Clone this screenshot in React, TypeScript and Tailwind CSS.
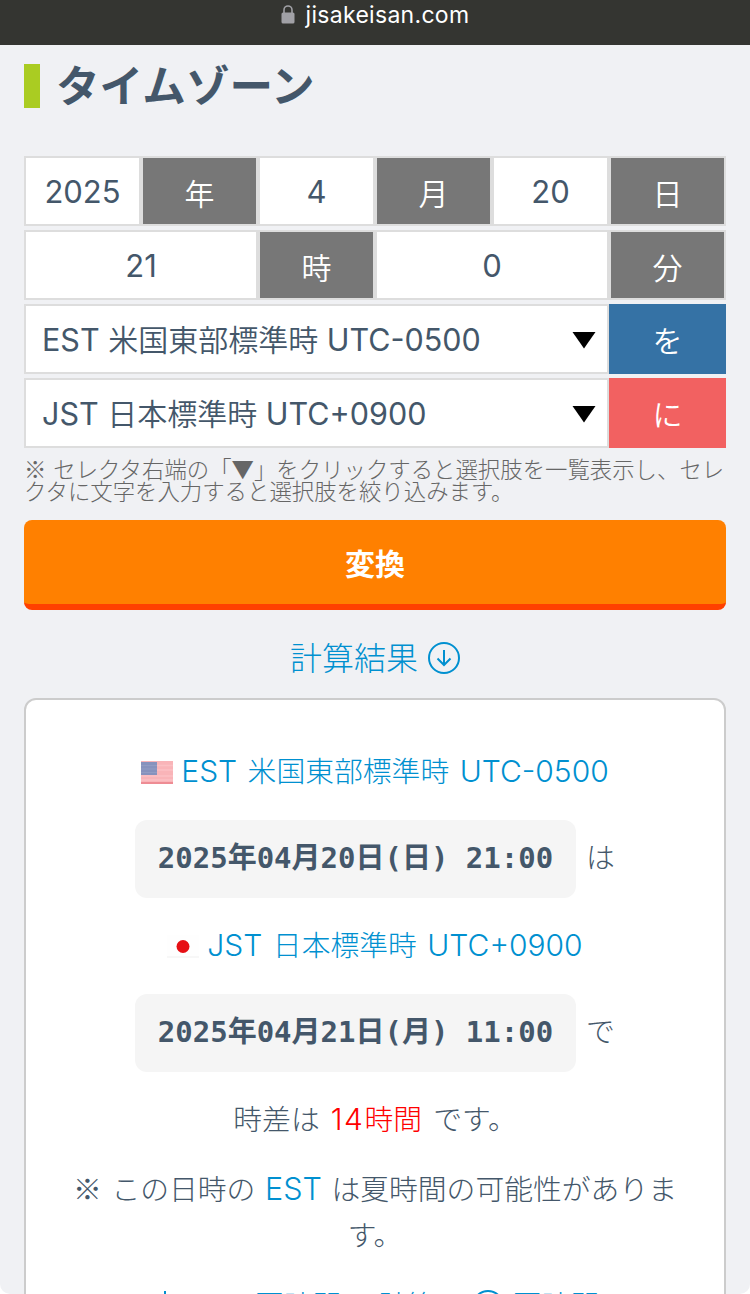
import React from "react";

type CELL_PROPS = {
  text: string;
  wide?: boolean;
};

function ValueCell(props: CELL_PROPS) {
  const { text, wide } = props;
  return (
    <div
      className={`${
        wide ? "col-span-2" : "col-span-1"
      } flex h-[70px] items-center justify-center border-2 border-[#ddd] bg-white pt-[3px] text-[31px]`}
    >
      {text}
    </div>
  );
}

function UnitCell(props: CELL_PROPS) {
  return (
    <div className="flex h-[70px] items-center justify-center border-2 border-[#ddd] bg-[#777] pt-[6px] text-[30px] font-[350] text-white">
      {props.text}
    </div>
  );
}

type ZONE_ROW_PROPS = {
  code: string;
  name: string;
  offset: string;
  particle: string;
  color: string;
};

function ZoneRow(props: ZONE_ROW_PROPS) {
  const { code, name, offset, particle, color } = props;
  return (
    <div className="flex h-[70px]">
      <div className="flex w-[585px] items-center justify-between border-2 border-[#ddd] bg-white pr-[11px] pl-4">
        <span className="pt-px text-[30.500px] leading-[60px] whitespace-nowrap">
          {code} <span className="text-[30px] font-[350]">{name}</span> {offset}
        </span>
        <svg className="mt-px" width="24" height="18" viewBox="0 0 24 18">
          <path d="M0.5 1h23L12 17.5z" fill="#000" />
        </svg>
      </div>
      <div
        className={`${color} flex w-[117px] items-center justify-center pt-[5px] text-[30px] font-[350] text-white`}
      >
        {particle}
      </div>
    </div>
  );
}

function UsFlag() {
  return (
    <svg className="mt-0.5" width="32" height="23" viewBox="0 0 32 23">
      <rect width="32" height="23" fill="#f9b4b8" />
      <path d="M16 4.5h16M16 9h16M0 15h32M0 19h32" stroke="#fbc0c3" strokeWidth="1.4" />
      <path d="M0 22h32" stroke="#ee8c94" strokeWidth="2" />
      <rect y="1" width="16" height="13" fill="#8792bd" />
      <path d="M0 4.5h16M0 8h16M0 11.5h16" stroke="#929cc3" strokeWidth="1" />
    </svg>
  );
}

function JpFlag() {
  return (
    <svg className="mt-0.5" width="32" height="23" viewBox="0 0 32 23">
      <rect width="32" height="23" fill="#fefefe" />
      <path d="M0 22h32" stroke="#f7f7f7" strokeWidth="2" />
      <circle cx="16" cy="11.5" r="6.5" fill="#e60f14" />
    </svg>
  );
}

type ZONE_LINK_PROPS = {
  flag: React.ReactNode;
  code: string;
  name: string;
  offset: string;
};

function ZoneLink(props: ZONE_LINK_PROPS) {
  const { flag, code, name, offset } = props;
  return (
    <a className="flex h-12 items-center justify-center gap-[8px] text-[#0090d0]">
      {flag}
      <span className="pb-px text-[30px] leading-[48px] whitespace-nowrap [word-spacing:2px]">
        {code} <span className="text-[28.800px]">{name}</span> {offset}
      </span>
    </a>
  );
}

type RESULT_PROPS = {
  date: string;
  particle: string;
};

function ResultDate(props: RESULT_PROPS) {
  return (
    <div className="flex h-[78px] pl-[109px]">
      <code className="flex w-[441px] items-center justify-center rounded-xl bg-[#f5f5f5] font-['DejaVu_Sans_Mono','Noto_Sans_CJK_JP',monospace] text-[29px] font-bold whitespace-pre">
        {props.date}
      </code>
      <span className="ml-[10px] self-center pb-0.5">{props.particle}</span>
    </div>
  );
}

function App() {
  return (
    <div className="h-[1294px] w-[750px] overflow-hidden rounded-b-[10px] bg-[#f0f1f4] font-['Inter','Noto_Sans_CJK_JP',sans-serif] text-[#44576a]">
      <header className="flex h-[45px] items-start justify-center bg-[#343531] text-white">
        <svg className="mt-[5px] mr-[11px]" width="14" height="19" viewBox="0 0 14 19">
          <path d="M3 9V5a4 4 0 0 1 8 0v4" fill="none" stroke="#a1a1a6" strokeWidth="1.6" />
          <rect x="0.5" y="7.5" width="13" height="11" rx="1.6" fill="#a1a1a6" />
        </svg>
        <span className="text-[23px] leading-[30px] tracking-[0.3px]">jisakeisan.com</span>
      </header>

      <main className="px-6">
        <h1 className="mt-[19px] flex h-11 items-center border-l-16 border-[#aacc22] pt-0.5 pl-4 text-[43.600px] font-bold whitespace-nowrap">
          タイムゾーン
        </h1>

        <div className="mt-12 flex flex-col gap-1">
          <div className="grid grid-cols-6">
            <ValueCell text="2025" />
            <UnitCell text="年" />
            <ValueCell text="4" />
            <UnitCell text="月" />
            <ValueCell text="20" />
            <UnitCell text="日" />
          </div>
          <div className="grid grid-cols-6">
            <ValueCell text="21" wide />
            <UnitCell text="時" />
            <ValueCell text="0" wide />
            <UnitCell text="分" />
          </div>
          <ZoneRow
            code="EST"
            name="米国東部標準時"
            offset="UTC-0500"
            particle="を"
            color="bg-[#3572a5]"
          />
          <ZoneRow
            code="JST"
            name="日本標準時"
            offset="UTC+0900"
            particle="に"
            color="bg-[#f26161]"
          />
        </div>

        <p className="mt-[9px] font-['Noto_Sans_CJK_JP',sans-serif] text-[22.400px] leading-[22.400px] font-light whitespace-nowrap text-[#666]">
          <span className="[word-spacing:2px]">※ セレクタ右端の「▼」をクリックすると選択肢を一覧表示し、セレ</span>
          <br />
          クタに文字を入力すると選択肢を絞り込みます。
        </p>

        <button className="mt-[18px] flex h-[90px] w-full items-center justify-center rounded-lg border-b-6 border-[#ff4000] bg-[#ff8000] pt-[5px] text-[30px] font-bold text-white">
          変換
        </button>

        <a className="mt-6 flex h-12 items-center justify-center gap-[10px] text-[32px] font-light text-[#0090d0]">
          <span className="pt-0.5">計算結果</span>
          <svg width="32" height="32" viewBox="0 0 32 32" fill="none" stroke="currentColor" strokeWidth="2">
            <circle cx="16" cy="16" r="15" />
            <path d="M16 8v15M9.5 16.5L16 23l6.500-6.500" />
          </svg>
        </a>

        <section className="mt-4 h-[640px] rounded-xl border-2 border-[#ccc] bg-white pt-12 text-[28.800px] font-light">
          <ZoneLink flag={<UsFlag />} code="EST" name="米国東部標準時" offset="UTC-0500" />
          <div className="mt-6">
            <ResultDate date="2025年04月20日(日) 21:00" particle="は" />
          </div>
          <div className="mt-6">
            <ZoneLink flag={<JpFlag />} code="JST" name="日本標準時" offset="UTC+0900" />
          </div>
          <div className="mt-6">
            <ResultDate date="2025年04月21日(月) 11:00" particle="で" />
          </div>
          <p className="mt-6 text-center leading-[46px] [word-spacing:3px]">
            時差は{" "}
            <span className="text-[#f00]">
              <span className="text-[30px] tracking-[1.500px]">14</span>時間
            </span>{" "}
            です。
          </p>
          <p className="mt-[22px] text-center leading-[46px] whitespace-nowrap [word-spacing:1.500px]">
            <span className="font-['Noto_Sans_CJK_JP']">※</span> この日時の{" "}
            <span className="text-[30.500px] text-[#0090d0]">EST</span> は夏時間の可能性がありま
            <br />
            す。
          </p>
          <div className="mt-[23px] flex h-12 items-center pl-[128px] text-[#0090d0]">
            <svg width="22" height="32" viewBox="0 0 22 32" fill="none" stroke="currentColor" strokeWidth="2">
              <path d="M11 1v28M3 21l8 8 8-8" />
            </svg>
            <span className="ml-[13px] pb-px whitespace-nowrap">
              <span className="text-[30px]">EDT </span>夏時間 で計算
            </span>
            <svg className="ml-[36px]" width="32" height="32" viewBox="0 0 32 32" fill="none" stroke="currentColor" strokeWidth="2">
              <circle cx="16" cy="16" r="15" />
              <path d="M12 12.500a4 4 0 1 1 6 3.500c-1.500.9-2 1.500-2 3.500M16 22v2.500" />
            </svg>
            <span className="ml-[9px] pb-px">夏時間</span>
          </div>
        </section>
      </main>
    </div>
  );
}

export default App;
